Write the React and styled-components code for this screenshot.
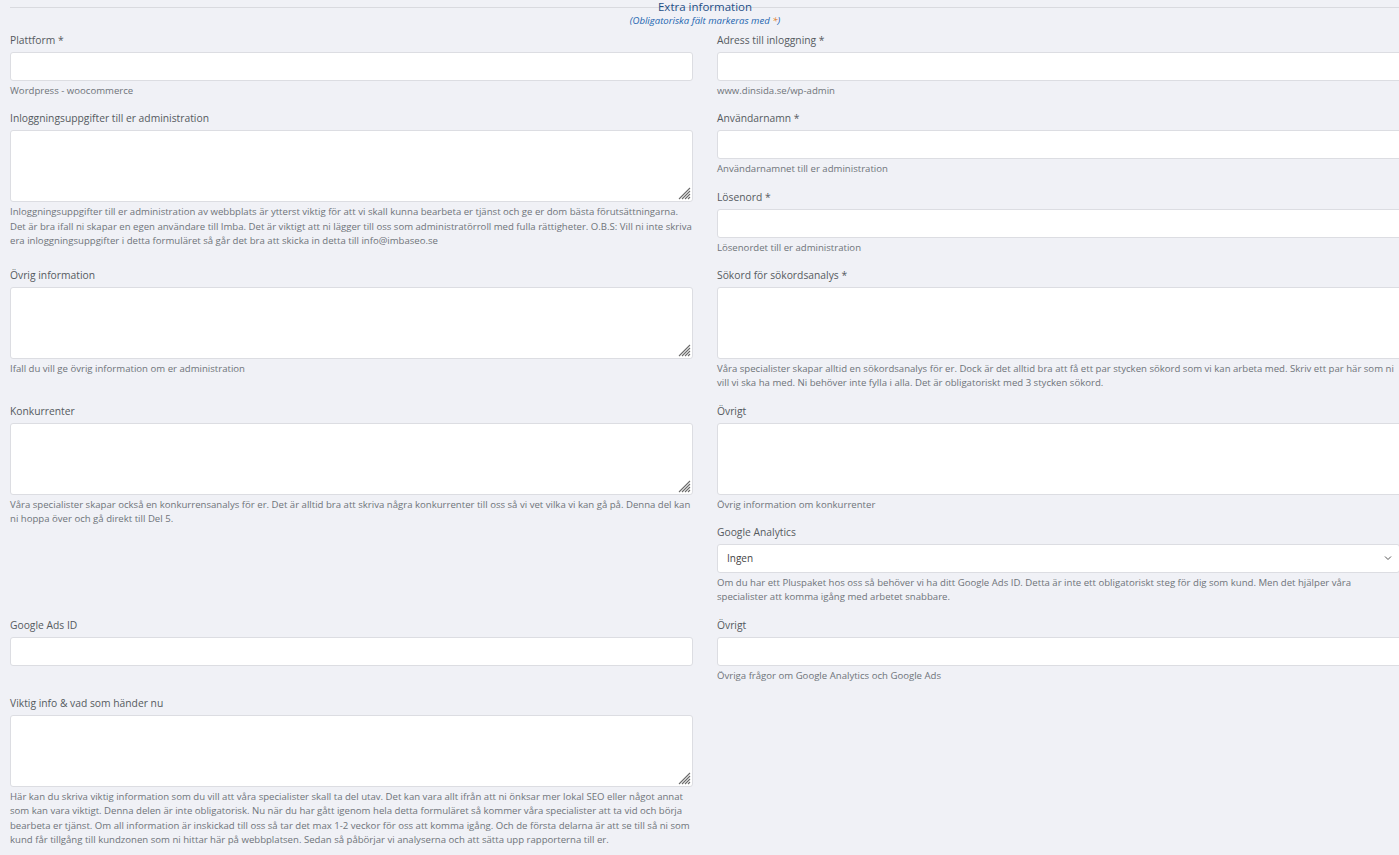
import React from "react";
import styled, { createGlobalStyle } from "styled-components";

const GlobalStyle = createGlobalStyle`
  html, body {
    margin: 0;
    padding: 0;
    background: #f0f1f6;
    overflow: hidden;
  }
  body {
    font-family: "Open Sans", "Noto Sans", sans-serif;
  }
`;

const Page = styled.div`
  width: 1400px;
  padding: 0 0 0 10px;
  box-sizing: content-box;
`;

const Header = styled.div`
  text-align: center;
  width: 1390px;
  height: 33px;
  background: linear-gradient(#d9dadf, #d9dadf) no-repeat 0 7px / 100% 1px;

  h2 {
    margin: 0;
    font-size: 11.5px;
    line-height: 14px;
    font-weight: 400;
    color: #1e4f86;
  }

  p {
    margin: 1px 0 0;
    font-size: 9.6px;
    line-height: 12px;
    font-style: italic;
    color: #2366b0;

    span {
      color: #e07b21;
    }
  }
`;

const Grid = styled.div`
  display: grid;
  grid-template-columns: 683px 700px;
  column-gap: 24px;
`;

const Cell = styled.div`
  display: flex;
  flex-direction: column;
`;

const Field = styled.div`
  display: flex;
  flex-direction: column;
  padding-bottom: 12.75px;

  label {
    font-size: 10.3px;
    line-height: 15px;
    color: #555a60;
    margin-bottom: 4px;
  }
`;

const Input = styled.div`
  height: 29px;
  box-sizing: border-box;
  background: #fff;
  border: 1px solid #dcdde2;
  border-radius: 3px;
`;

const TextArea = styled(Input)`
  height: 72px;
  position: relative;

  svg {
    position: absolute;
    right: 1px;
    bottom: 1px;
  }
`;

const Select = styled(Input)`
  display: flex;
  align-items: center;
  justify-content: space-between;
  padding: 0 7px 0 9px;
  width: 683px;
  font-size: 10px;
  color: #444;
`;

const Help = styled.div`
  margin-top: 3px;
  font-size: 9.6px;
  line-height: 14.5px;
  color: #6f747a;
  width: 682px;
`;

const Grip = () => (
  <svg width="14" height="14" viewBox="0 0 14 14">
    <g stroke="#6a6a6a" strokeWidth="1.1">
      <line x1="13" y1="2" x2="2" y2="13" />
      <line x1="13" y1="5" x2="5" y2="13" />
      <line x1="13" y1="8" x2="8" y2="13" />
      <line x1="13" y1="11" x2="11" y2="13" />
    </g>
  </svg>
);

const FormField = ({ label, type = "input", help, value }) => (
  <Field>
    <label>{label}</label>
    {type === "textarea" && (
      <TextArea>
        <Grip />
      </TextArea>
    )}
    {type === "input" && <Input />}
    {type === "select" && (
      <Select>
        <span>{value}</span>
        <svg width="8" height="6" viewBox="0 0 8 6">
          <path d="M1 1.5 L4 4.5 L7 1.5" fill="none" stroke="#555" strokeWidth="1" />
        </svg>
      </Select>
    )}
    {help && <Help>{help}</Help>}
  </Field>
);

export default function App() {
  return (
    <>
      <GlobalStyle />
      <Page>
        <Header>
          <h2>Extra information</h2>
          <p>
            (Obligatoriska fält markeras med <span>*</span>)
          </p>
        </Header>
        <Grid>
          <Cell>
            <FormField label="Plattform *" help="Wordpress - woocommerce" />
          </Cell>
          <Cell>
            <FormField label="Adress till inloggning *" help="www.dinsida.se/wp-admin" />
          </Cell>

          <Cell>
            <FormField
              label="Inloggningsuppgifter till er administration"
              type="textarea"
              help="Inloggningsuppgifter till er administration av webbplats är ytterst viktig för att vi skall kunna bearbeta er tjänst och ge er dom bästa förutsättningarna. Det är bra ifall ni skapar en egen användare till Imba. Det är viktigt att ni lägger till oss som administratörroll med fulla rättigheter. O.B.S: Vill ni inte skriva era inloggningsuppgifter i detta formuläret så går det bra att skicka in detta till info@imbaseo.se"
            />
          </Cell>
          <Cell>
            <FormField label="Användarnamn *" help="Användarnamnet till er administration" />
            <FormField label="Lösenord *" help="Lösenordet till er administration" />
          </Cell>

          <Cell>
            <FormField
              label="Övrig information"
              type="textarea"
              help="Ifall du vill ge övrig information om er administration"
            />
          </Cell>
          <Cell>
            <FormField
              label="Sökord för sökordsanalys *"
              type="textarea"
              help="Våra specialister skapar alltid en sökordsanalys för er. Dock är det alltid bra att få ett par stycken sökord som vi kan arbeta med. Skriv ett par här som ni vill vi ska ha med. Ni behöver inte fylla i alla. Det är obligatoriskt med 3 stycken sökord."
            />
          </Cell>

          <Cell>
            <FormField
              label="Konkurrenter"
              type="textarea"
              help="Våra specialister skapar också en konkurrensanalys för er. Det är alltid bra att skriva några konkurrenter till oss så vi vet vilka vi kan gå på. Denna del kan ni hoppa över och gå direkt till Del 5."
            />
          </Cell>
          <Cell>
            <FormField label="Övrigt" type="textarea" help="Övrig information om konkurrenter" />
            <FormField
              label="Google Analytics"
              type="select"
              value="Ingen"
              help="Om du har ett Pluspaket hos oss så behöver vi ha ditt Google Ads ID. Detta är inte ett obligatoriskt steg för dig som kund. Men det hjälper våra specialister att komma igång med arbetet snabbare."
            />
          </Cell>

          <Cell>
            <FormField label="Google Ads ID" />
          </Cell>
          <Cell>
            <FormField label="Övrigt" help="Övriga frågor om Google Analytics och Google Ads" />
          </Cell>

          <Cell>
            <FormField
              label="Viktig info & vad som händer nu"
              type="textarea"
              help="Här kan du skriva viktig information som du vill att våra specialister skall ta del utav. Det kan vara allt ifrån att ni önksar mer lokal SEO eller något annat som kan vara viktigt. Denna delen är inte obligatorisk. Nu när du har gått igenom hela detta formuläret så kommer våra specialister att ta vid och börja bearbeta er tjänst. Om all information är inskickad till oss så tar det max 1-2 veckor för oss att komma igång. Och de första delarna är att se till så ni som kund får tillgång till kundzonen som ni hittar här på webbplatsen. Sedan så påbörjar vi analyserna och att sätta upp rapporterna till er."
            />
          </Cell>
          <Cell />
        </Grid>
      </Page>
    </>
  );
}
